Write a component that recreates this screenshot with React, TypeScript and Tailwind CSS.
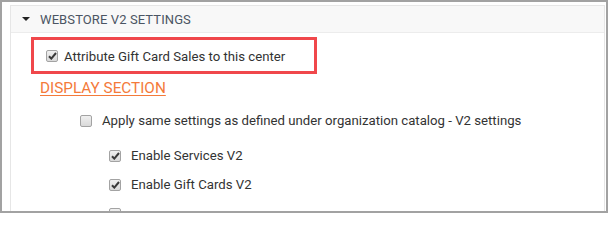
import type { ReactNode } from "react"

function Box({ checked }: { checked?: boolean }) {
  return (
    <span className="w-[12px] h-[12px] shrink-0 rounded-[2px] border border-[#a3a3a3] bg-gradient-to-b from-[#f0f0f0] to-[#d9d9d9] flex items-center justify-center">
      {checked && (
        <svg width="9" height="8" viewBox="0 0 9 8">
          <path d="M1 4.2 L3.3 6.6 L8 1" fill="none" stroke="#3a3a3a" strokeWidth="2" />
        </svg>
      )}
    </span>
  )
}

function Row({ checked, indent, children }: { checked?: boolean; indent: string; children?: ReactNode }) {
  return (
    <div className={`flex items-center h-[18px] ${indent}`}>
      <Box checked={checked} />
      {children && <span className="ml-[10px] text-[13.2px] leading-[18px] text-[#333]">{children}</span>}
    </div>
  )
}

export default function App() {
  return (
    <div className="w-[608px] h-[213px] overflow-hidden bg-white border-2 border-[#a2a2a2] pt-[3px] pl-[8px] pr-[1px] font-['Roboto',sans-serif]">
      <div className="h-full border-l border-r border-t border-[#e6e6e6]">
        <div className="h-[27px] bg-[#f8f8f8] border-b border-[#ececec] flex items-center pl-[11px] pt-[2px]">
          <svg width="8" height="4" viewBox="0 0 8 4" className="-mt-[2px]">
            <path d="M0 0 L8 0 L4 4 Z" fill="#222" />
          </svg>
          <span className="ml-[10px] text-[13px] leading-[16px] text-[#4b5563] tracking-[0.1px]">
            WEBSTORE V2 SETTINGS
          </span>
        </div>

        <div className="ml-[20px] mt-[4px] w-[286px] h-[37px] border-[3px] border-[#f0474b] flex items-center pl-[12px]">
          <Box checked />
          <span className="ml-[6px] pt-[2px] text-[13.2px] leading-[18px] text-[#333]">
            Attribute Gift Card Sales to this center
          </span>
        </div>

        <div className="ml-[29px] mt-[5px] text-[15.3px] leading-[18px] text-[#f47a3a] underline underline-offset-[2px]">
          DISPLAY SECTION
        </div>

        <div className="mt-[15px]">
          <Row indent="ml-[69px]">
            Apply same settings as defined under organization catalog - V2 settings
          </Row>
          <Row checked indent="ml-[98px] mt-[17px]">
            Enable Services V2
          </Row>
          <Row checked indent="ml-[98px] mt-[11px]">
            Enable Gift Cards V2
          </Row>
          <Row indent="ml-[98px] mt-[11px]" />
        </div>
      </div>
    </div>
  )
}
